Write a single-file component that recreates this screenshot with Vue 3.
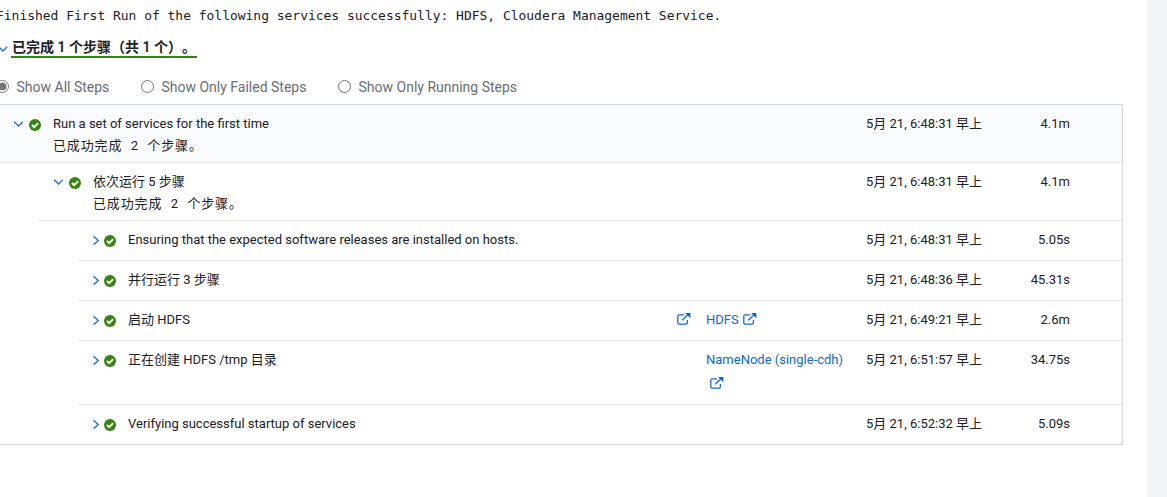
<script setup>
const filters = [
  { label: 'Show All Steps', checked: true },
  { label: 'Show Only Failed Steps', checked: false },
  { label: 'Show Only Running Steps', checked: false },
]

const steps = [
  { level: 0, open: true, title: 'Run a set of services for the first time', note: '已成功完成 2 个步骤。', time: '5月 21, 6:48:31 早上', duration: '4.1m' },
  { level: 1, open: true, title: '依次运行 5 步骤', note: '已成功完成 2 个步骤。', time: '5月 21, 6:48:31 早上', duration: '4.1m' },
  { level: 2, title: 'Ensuring that the expected software releases are installed on hosts.', time: '5月 21, 6:48:31 早上', duration: '5.05s' },
  { level: 2, title: '并行运行 3 步骤', time: '5月 21, 6:48:36 早上', duration: '45.31s' },
  { level: 2, title: '启动 HDFS', link: true, context: 'HDFS', time: '5月 21, 6:49:21 早上', duration: '2.6m' },
  { level: 2, title: '正在创建 HDFS /tmp 目录', context: 'NameNode (single-cdh)', tall: true, time: '5月 21, 6:51:57 早上', duration: '34.75s' },
  { level: 2, title: 'Verifying successful startup of services', time: '5月 21, 6:52:32 早上', duration: '5.09s' },
]
</script>

<template>
  <div class="page">
    <main class="content">
      <p class="message">Finished First Run of the following services successfully: HDFS, Cloudera Management Service.</p>

      <div class="summary">
        <svg class="chevron" width="10" height="10" viewBox="0 0 10 10"><path d="M0.8 2.8 5 7 9.2 2.8" /></svg>
        <h2>已完成 1 个步骤（共 1 个）。</h2>
      </div>

      <div class="filters">
        <label v-for="f in filters" :key="f.label" class="filter">
          <span class="radio" :class="{ checked: f.checked }"></span>
          <span>{{ f.label }}</span>
        </label>
      </div>

      <div class="table">
        <div
          v-for="(s, i) in steps"
          :key="i"
          class="row"
          :class="['level-' + s.level, { tall: s.tall, noted: s.note }]"
        >
          <div class="step">
            <svg class="chevron" width="10" height="10" viewBox="0 0 10 10">
              <path v-if="s.open" d="M1.2 2.8 5.5 7 9.8 2.8" />
              <path v-else d="M2.6 1.2 7.2 5.5 2.6 9.8" />
            </svg>
            <svg class="status" width="12" height="12" viewBox="0 0 12 12">
              <circle cx="6" cy="6" r="6" />
              <path d="M2.9 6 5.2 8.2 9.1 4.3" />
            </svg>
            <div class="text">
              <div>{{ s.title }}</div>
              <div v-if="s.note" class="note">{{ s.note }}</div>
            </div>
          </div>
          <div class="jump">
            <svg v-if="s.link" class="external" width="14" height="12" viewBox="0 0 14 12">
              <path class="box" d="M7.2 1.8H2.2Q.8 1.8.8 3.2V9.8Q.8 11.2 2.2 11.2H9Q10.4 11.2 10.4 9.8V7" />
              <path class="box" d="M5.2 7.2 11 1.8" />
              <path class="head" d="M8.2 0H13.4V5.2Z" />
            </svg>
          </div>
          <div class="context">
            <template v-if="s.context">
              <a>{{ s.context }}</a>
              <svg class="external" width="14" height="12" viewBox="0 0 14 12">
                <path class="box" d="M7.2 1.8H2.2Q.8 1.8.8 3.2V9.8Q.8 11.2 2.2 11.2H9Q10.4 11.2 10.4 9.8V7" />
                <path class="box" d="M5.2 7.2 11 1.8" />
                <path class="head" d="M8.2 0H13.4V5.2Z" />
              </svg>
            </template>
          </div>
          <div class="time">{{ s.time }}</div>
          <div class="duration">{{ s.duration }}</div>
        </div>
      </div>
    </main>
    <aside class="gutter"></aside>
  </div>
</template>

<style>
body {
  overflow: hidden;
  background: #fff;
}
</style>

<style scoped>
.page {
  display: flex;
  width: 1167px;
  height: 497px;
  overflow: hidden;
  font: 13px/22px Roboto, "Noto Sans CJK SC", sans-serif;
  color: #1b2025;
}
.content {
  width: 1147px;
  flex: none;
}
.gutter {
  flex: 1;
  background: #f3f4f6;
}
.message {
  margin: 5px 0 0 -4px;
  font: 12.96px/22px "DejaVu Sans Mono", monospace;
  white-space: nowrap;
}
.summary {
  display: flex;
  align-items: flex-start;
  height: 31px;
  margin: 10px 0 0 -2px;
}
.summary .chevron {
  margin-top: 7px;
}
.summary h2 {
  margin: 0 0 0 3px;
  padding-left: 1px;
  width: 185px;
  height: 19px;
  border-bottom: 2px solid #338510;
  font-size: 14px;
  line-height: 20px;
  font-weight: 600;
  white-space: nowrap;
  text-spacing-trim: space-all;
}
.chevron {
  flex: none;
  fill: none;
  stroke: #2b70dc;
  stroke-width: 1.4;
}
.filters {
  display: flex;
  gap: 31.6px;
  height: 36px;
  padding-top: 8px;
  box-sizing: border-box;
  margin-left: -4px;
  font-size: 14px;
  color: #686e75;
}
.filter {
  display: flex;
  gap: 7.5px;
  white-space: nowrap;
}
.radio {
  box-sizing: border-box;
  width: 13px;
  height: 13px;
  margin-top: 4px;
  border: 1px solid #767676;
  border-radius: 50%;
}
.radio.checked {
  background: radial-gradient(circle, #767676 3.6px, transparent 4.3px);
}
.table {
  width: 1123px;
  box-sizing: border-box;
  border: solid #d4d6dc;
  border-width: 1px 1px 1px 0;
}
.row {
  display: flex;
  box-sizing: border-box;
  height: 40px;
  padding-top: 8px;
  border-bottom: 1px solid #e6e8eb;
}
.row.noted {
  height: 58px;
}
.row.tall {
  height: 64px;
}
.row:last-child {
  height: 39px;
  border-bottom: 0;
}
.level-0 {
  padding-left: 13px;
  background: #fafbfd;
}
.level-1 {
  margin-left: 38px;
  padding-left: 15px;
}
.level-2 {
  margin-left: 78px;
  padding-left: 13px;
}
.step {
  display: flex;
  flex: 1;
}
.step .chevron {
  margin-top: 6px;
}
.status {
  flex: none;
  margin: 6px 12px 0 6px;
  fill: #338510;
}
.level-2 .status {
  margin-left: 3px;
}
.status path {
  fill: none;
  stroke: #fff;
  stroke-width: 2;
}
.text {
  white-space: nowrap;
}
.note {
  letter-spacing: 0.85px;
  word-spacing: 4.4px;
}
.jump {
  width: 29px;
}
.context {
  width: 160px;
  line-height: 23px;
  margin-top: -1px;
}
.context a {
  margin-right: 4px;
  color: #0b6ad8;
}
.external {
  overflow: visible;
}
.jump .external {
  margin-top: 4px;
  display: block;
}
.context .external {
  vertical-align: -1px;
}
.tall .external {
  display: block;
  margin: 6px 0 0 4px;
}
.box {
  fill: none;
  stroke: #1268dc;
  stroke-width: 1.3;
}
.head {
  fill: #0b62dc;
}
.time {
  width: 144px;
  white-space: nowrap;
}
.duration {
  width: 60px;
  margin-right: 52px;
  text-align: right;
}
</style>
